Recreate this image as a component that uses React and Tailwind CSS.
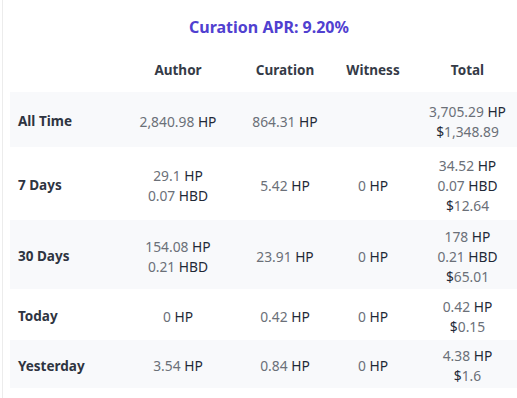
import React from "react";

const rows = [
  { label: "All Time", h: "h-[55px]", bg: true, author: [["2,840.98", "HP"]], curation: [["864.31", "HP"]], witness: [], total: [["3,705.29", "HP"], ["$", "1,348.89", true]] },
  { label: "7 Days", h: "h-[73px]", bg: false, author: [["29.1", "HP"], ["0.07", "HBD"]], curation: [["5.42", "HP"]], witness: [["0", "HP"]], total: [["34.52", "HP"], ["0.07", "HBD"], ["$", "12.64", true]] },
  { label: "30 Days", h: "h-[69px]", bg: true, author: [["154.08", "HP"], ["0.21", "HBD"]], curation: [["23.91", "HP"]], witness: [["0", "HP"]], total: [["178", "HP"], ["0.21", "HBD"], ["$", "65.01", true]] },
  { label: "Today", h: "h-[51px]", bg: false, author: [["0", "HP"]], curation: [["0.42", "HP"]], witness: [["0", "HP"]], total: [["0.42", "HP"], ["$", "0.15", true]] },
  { label: "Yesterday", h: "h-[48px]", bg: true, author: [["3.54", "HP"]], curation: [["0.84", "HP"]], witness: [["0", "HP"]], total: [["4.38", "HP"], ["$", "1.6", true]] },
];

function Line({ item }) {
  if (item[2]) {
    return (
      <div className="leading-[20px]">
        <span className="text-[#1f2937]">$</span>
        <span className="text-[#6b7078]">{item[1]}</span>
      </div>
    );
  }
  return (
    <div className="leading-[20px]">
      <span className="text-[#6b7078]">{item[0]}</span>{" "}
      <span className="text-[#1f2937]">{item[1]}</span>
    </div>
  );
}

function Cell({ items }) {
  return (
    <div className="flex flex-col items-center justify-center text-center text-[13.8px]">
      {items.map((it, i) => (
        <Line key={i} item={it} />
      ))}
    </div>
  );
}

export default function App() {
  const cols = "grid grid-cols-[115px_106px_108px_68px_121px] items-center";
  return (
    <div
      className="w-[517px] h-[398px] overflow-hidden bg-white relative"
      style={{ fontFamily: '"Noto Sans", "Open Sans", sans-serif' }}
    >
      <div className="absolute left-[2px] top-0 bottom-0 w-px bg-[#ececec]" />
      <div className="ml-[10px] w-[518px] text-[13.5px]">
        <div className="pt-[16px] h-[48px] text-center text-[16px] font-bold text-[#5040d0] leading-[22px]">
          Curation APR: 9.20%
        </div>
        <div className={`${cols} h-[44px] text-[13.5px] font-bold text-[#353b47]`}>
          <div />
          <div className="text-center">Author</div>
          <div className="text-center">Curation</div>
          <div className="text-center">Witness</div>
          <div className="text-center">Total</div>
        </div>
        {rows.map((r) => (
          <div key={r.label} className={`${cols} ${r.h} pt-[4px] ${r.bg ? "bg-[#f8f9fb]" : "bg-white"}`}>
            <div className="pl-[8px] font-bold text-[#2e3441]">{r.label}</div>
            <Cell items={r.author} />
            <Cell items={r.curation} />
            <Cell items={r.witness} />
            <Cell items={r.total} />
          </div>
        ))}
      </div>
    </div>
  );
}
